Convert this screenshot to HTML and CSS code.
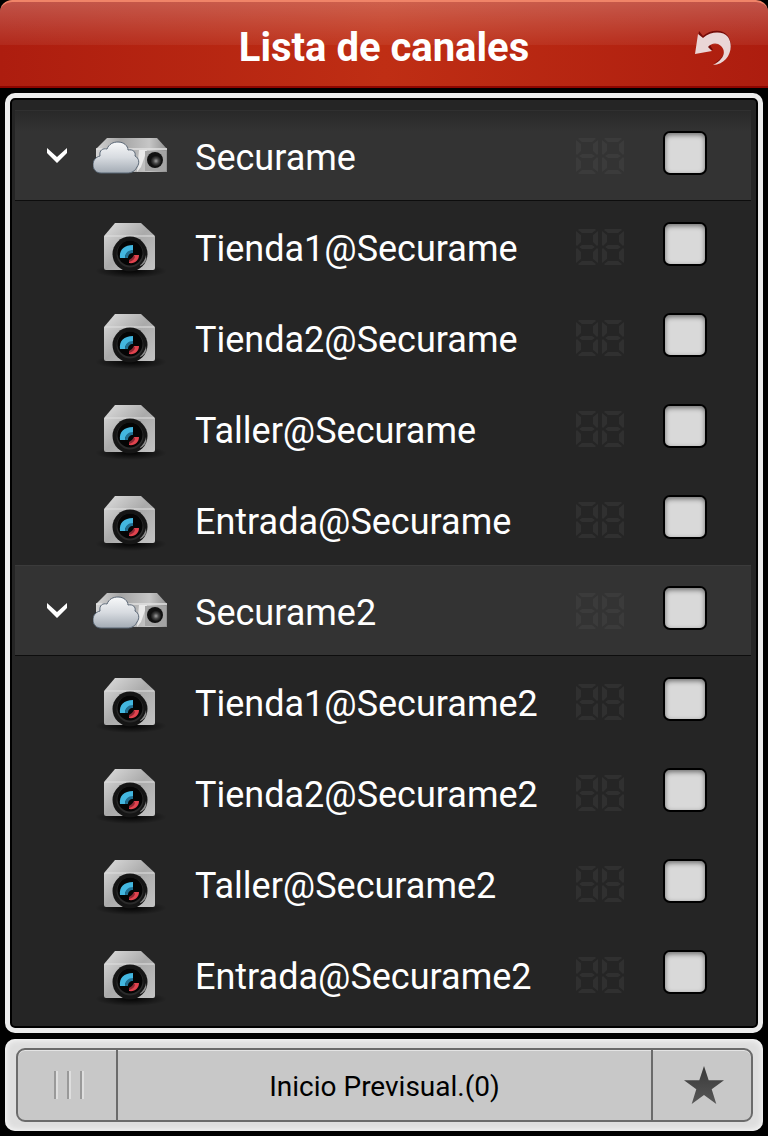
FILE: index.html
```html
<!DOCTYPE html>
<html lang="es">
<head>
    <meta charset="UTF-8">
    <meta name="viewport" content="width=device-width, initial-scale=1.0">
    <title>Lista de canales</title>
    <link rel="stylesheet" href="styles.css">
</head>
<body>
    <!-- shared icons -->
    <svg class="sprite" aria-hidden="true">
        <defs>
            <linearGradient id="metal" x1="0" y1="0" x2="1" y2="0">
                <stop offset="0" stop-color="#d4d4d4"/>
                <stop offset="0.35" stop-color="#a4a4a4"/>
                <stop offset="0.75" stop-color="#c6c6c6"/>
                <stop offset="1" stop-color="#909090"/>
            </linearGradient>
            <linearGradient id="body" x1="0" y1="0" x2="1" y2="1">
                <stop offset="0" stop-color="#dedede"/>
                <stop offset="0.5" stop-color="#aaaaaa"/>
                <stop offset="1" stop-color="#c4c4c4"/>
            </linearGradient>
            <linearGradient id="cloud" x1="0" y1="0" x2="0" y2="1">
                <stop offset="0" stop-color="#f8f9fa"/>
                <stop offset="0.5" stop-color="#d7dbe0"/>
                <stop offset="1" stop-color="#a3abb4"/>
            </linearGradient>
            <radialGradient id="lens">
                <stop offset="0" stop-color="#a0a0a0"/>
                <stop offset="0.5" stop-color="#454545"/>
                <stop offset="1" stop-color="#101010"/>
            </radialGradient>
            <radialGradient id="shadow">
                <stop offset="0" stop-color="#000" stop-opacity="0.9"/>
                <stop offset="1" stop-color="#000" stop-opacity="0"/>
            </radialGradient>
            <linearGradient id="starFill" x1="0" y1="0" x2="0" y2="1">
                <stop offset="0" stop-color="#383838"/>
                <stop offset="1" stop-color="#575757"/>
            </linearGradient>
        </defs>
        <symbol id="icon-device" viewBox="0 0 80 54">
            <path d="M14 9H64L74 20V43H3V20Z" fill="url(#metal)"/>
            <path d="M3 20H74" stroke="#e2e2e2" stroke-width="1.5"/>
            <path d="M46 21H54L48 38L44 43Z" fill="#f4f4f4" opacity="0.8"/>
            <rect x="52" y="22" width="21" height="20" fill="#a4a4a4"/>
            <circle cx="62" cy="31" r="8" fill="#111"/>
            <circle cx="63" cy="32" r="5.5" fill="url(#lens)"/>
            <path d="M8 44C3 44 0 40 0 36C0 31 3 28 7 27C6 21 10 19 14 20C16 15 20 13 25 13C31 13 35 17 35 21C40 20 43 23 42 27C46 29 47 34 44 38C42 42 39 44 34 44Z" fill="url(#cloud)" stroke="#596675" stroke-width="1"/>
        </symbol>
        <symbol id="icon-camera" viewBox="0 0 80 64">
            <ellipse cx="38" cy="56" rx="36" ry="7" fill="url(#shadow)"/>
            <path d="M22 8H48L62 21V53Q62 55 60 55H13Q11 55 11 53V21Z" fill="url(#body)"/>
            <path d="M12 21H61" stroke="#e0e0e0" stroke-width="1"/>
            <circle cx="37" cy="39" r="17.5" fill="#151515"/>
            <circle cx="37" cy="39" r="13.5" fill="#2b2b2b"/>
            <circle cx="37" cy="38" r="12.5" fill="#050505"/>
            <path d="M46 51Q52 47 53 40Q55 49 46 51Z" fill="#8c8c8c"/>
            <path d="M27 43C26 35 31 30 40 30V36C35 36 32 39 32 43Z" fill="#43b7e0"/>
            <path d="M32 43C32 38 35 35 40 35V38C37 38 35 40 35 43Z" fill="#216f91"/>
            <path d="M36 48V45C39 45 41 43 41 40H46C46 45 42 49 36 48Z" fill="#e0434e"/>
            <path d="M36 45C38 44 40 42 41 40L42 42C41 45 39 46 36 47Z" fill="#8e2732"/>
        </symbol>
        <symbol id="digit" viewBox="0 0 22 36">
            <path d="M3 0H19L20 1L16 4H6L2 1ZM6 16H16L19 18L16 20H6L3 18ZM6 32H16L20 35L19 36H3L2 35ZM0 2L5 6V13L1 17L0 16ZM22 2L17 6V13L21 17L22 16ZM0 20L1 19L5 23V30L0 34ZM22 20L21 19L17 23V30L22 34Z"/>
        </symbol>
        <symbol id="icon-digits" viewBox="0 0 48 36">
            <use href="#digit" width="22" height="36"/>
            <use href="#digit" x="26" width="22" height="36"/>
        </symbol>
        <symbol id="icon-chevron" viewBox="0 0 22 18">
            <path d="M1 1L11 10L21 1V6L11 16L1 6Z" fill="#fff"/>
        </symbol>
    </svg>

    <header class="header">
        <h1>Lista de canales</h1>
        <button class="back-btn" type="button" aria-label="Volver">
            <svg viewBox="0 0 40 40">
                <path class="back-shadow" d="M5 3L9 8C17 1 29 1 34 8C41 19 34 34 20 35C29 31 33 23 28 17C24 12 18 13 16 17L19 22L2 24Z"/>
                <path class="back-arrow" d="M4 6L9 10C17 3 29 3 34 9C41 20 34 36 19 37C29 32 33 24 27 18C23 14 17 15 14 19L18 23L1 26Z"/>
            </svg>
        </button>
    </header>

    <main class="panel">
        <ul class="channel-list">
            <li class="row group">
                <button class="toggle" type="button" aria-label="Contraer Securame" aria-expanded="true"><svg><use href="#icon-chevron"/></svg></button>
                <svg class="device"><use href="#icon-device"/></svg>
                <label class="name" for="dev1">Securame</label>
                <svg class="digits"><use href="#icon-digits"/></svg>
                <input type="checkbox" id="dev1">
            </li>
            <li class="row">
                <svg class="camera"><use href="#icon-camera"/></svg>
                <label class="name" for="ch1">Tienda1@Securame</label>
                <svg class="digits"><use href="#icon-digits"/></svg>
                <input type="checkbox" id="ch1">
            </li>
            <li class="row">
                <svg class="camera"><use href="#icon-camera"/></svg>
                <label class="name" for="ch2">Tienda2@Securame</label>
                <svg class="digits"><use href="#icon-digits"/></svg>
                <input type="checkbox" id="ch2">
            </li>
            <li class="row">
                <svg class="camera"><use href="#icon-camera"/></svg>
                <label class="name" for="ch3">Taller@Securame</label>
                <svg class="digits"><use href="#icon-digits"/></svg>
                <input type="checkbox" id="ch3">
            </li>
            <li class="row">
                <svg class="camera"><use href="#icon-camera"/></svg>
                <label class="name" for="ch4">Entrada@Securame</label>
                <svg class="digits"><use href="#icon-digits"/></svg>
                <input type="checkbox" id="ch4">
            </li>
            <li class="row group">
                <button class="toggle" type="button" aria-label="Contraer Securame2" aria-expanded="true"><svg><use href="#icon-chevron"/></svg></button>
                <svg class="device"><use href="#icon-device"/></svg>
                <label class="name" for="dev2">Securame2</label>
                <svg class="digits"><use href="#icon-digits"/></svg>
                <input type="checkbox" id="dev2">
            </li>
            <li class="row">
                <svg class="camera"><use href="#icon-camera"/></svg>
                <label class="name" for="ch5">Tienda1@Securame2</label>
                <svg class="digits"><use href="#icon-digits"/></svg>
                <input type="checkbox" id="ch5">
            </li>
            <li class="row">
                <svg class="camera"><use href="#icon-camera"/></svg>
                <label class="name" for="ch6">Tienda2@Securame2</label>
                <svg class="digits"><use href="#icon-digits"/></svg>
                <input type="checkbox" id="ch6">
            </li>
            <li class="row">
                <svg class="camera"><use href="#icon-camera"/></svg>
                <label class="name" for="ch7">Taller@Securame2</label>
                <svg class="digits"><use href="#icon-digits"/></svg>
                <input type="checkbox" id="ch7">
            </li>
            <li class="row">
                <svg class="camera"><use href="#icon-camera"/></svg>
                <label class="name" for="ch8">Entrada@Securame2</label>
                <svg class="digits"><use href="#icon-digits"/></svg>
                <input type="checkbox" id="ch8">
            </li>
        </ul>
    </main>

    <footer class="footer">
        <div class="toolbar">
            <button class="grip" type="button" aria-label="Panel"><span></span><span></span><span></span></button>
            <button class="start" type="button">Inicio Previsual.(0)</button>
            <button class="favorite" type="button" aria-label="Favoritos">
                <svg viewBox="0 0 40 38"><path d="M20 0L24.7 14.3H40L27.7 23.2L32.3 38L20 29L7.7 38L12.3 23.2L0 14.3H15.3Z" fill="url(#starFill)"/></svg>
            </button>
        </div>
    </footer>
</body>
</html>
```
FILE: styles.css
```css
* {
    box-sizing: border-box;
}

body {
    margin: 0;
    background: #000;
    font-family: Roboto, "Liberation Sans", sans-serif;
    color: #fff;
}

button {
    margin: 0;
    padding: 0;
    border: none;
    background: none;
    font-family: inherit;
    cursor: pointer;
}

svg {
    display: block;
}

.sprite {
    position: absolute;
    width: 0;
    height: 0;
}

/* header */
.header {
    display: grid;
    grid-template-columns: 74px 1fr 74px;
    align-items: center;
    height: 88px;
    padding-top: 8px;
    border-top: 2px solid #f08468;
    border-bottom: 2px solid #8c0500;
    border-radius: 12px 12px 0 0;
    background:
        linear-gradient(rgba(255, 255, 255, 0.24), rgba(255, 255, 255, 0.05)) top / 100% 43px no-repeat,
        linear-gradient(90deg, #ad1d0f, #bf2e14 50%, #ad1d0f);
}

.header h1 {
    grid-column: 2;
    margin: 0;
    font-size: 40px;
    line-height: 48px;
    text-align: center;
}

.back-btn svg {
    width: 40px;
    height: 40px;
}

.back-shadow {
    fill: #750b07;
}

.back-arrow {
    fill: #ead6d6;
}

/* channel list */
.panel {
    margin: 5px 5px 0;
    padding: 10px 5px 6px 3px;
    border: 5px solid #ececec;
    border-radius: 10px;
    background: #252525;
    box-shadow: inset 0 0 0 2px #000;
}

.channel-list {
    margin: 0;
    padding: 2px;
    list-style: none;
}

.row {
    display: flex;
    align-items: center;
    height: 91px;
    padding: 0 44px 0 78px;
}

.group {
    padding-left: 31px;
    border-top: 1px solid #3b3b3b;
    border-bottom: 1px solid #0d0d0d;
    background: #333;
}

.group:first-child {
    background: linear-gradient(#292929, #333 20px);
    border-top-color: #303030;
}

.toggle {
    width: 22px;
    margin-right: 25px;
}

.toggle svg {
    width: 22px;
    height: 18px;
}

.device {
    width: 80px;
    height: 54px;
}

.camera {
    width: 80px;
    height: 64px;
}

.name {
    flex: 1;
    margin-left: 22px;
    font-size: 36px;
    line-height: 44px;
    padding-top: 4px;
}

.digits {
    width: 48px;
    height: 36px;
    margin-right: 39px;
    fill: #303030;
}

.group .digits {
    fill: #3b3b3b;
}

input[type="checkbox"] {
    appearance: none;
    width: 44px;
    height: 44px;
    margin: 0 0 5px;
    border: 2px solid #000;
    border-radius: 7px;
    background: #d9d9d9;
    box-shadow: inset 0 2px 5px rgba(0, 0, 0, 0.5);
    cursor: pointer;
}

input[type="checkbox"]:checked {
    background: #bf2e14;
}

/* bottom bar */
.footer {
    margin: 6px 5px 4px;
    padding: 9px 10px 9px 11px;
    border-radius: 10px;
    background: #dedede;
    box-shadow: inset 0 0 7px #fff;
}

.toolbar {
    display: flex;
    height: 74px;
    border: 2px solid #6b6b6b;
    border-radius: 9px;
    background: #c8c8c8;
    box-shadow: inset 0 1px 0 #e4e4e4;
}

.grip {
    display: flex;
    align-items: center;
    justify-content: center;
    gap: 9px;
    width: 100px;
    padding-left: 3px;
    border-right: 2px solid #6b6b6b;
}

.grip span {
    width: 4px;
    height: 28px;
    border-left: 2px solid #999;
    border-right: 2px solid #dedede;
}

.start {
    flex: 1;
    padding-top: 3px;
    font-size: 28px;
    line-height: 34px;
    color: #000;
}

.favorite {
    display: flex;
    align-items: center;
    justify-content: center;
    width: 100px;
    padding-left: 3px;
    border-left: 2px solid #6b6b6b;
}

.favorite svg {
    width: 40px;
    height: 38px;
}
```
